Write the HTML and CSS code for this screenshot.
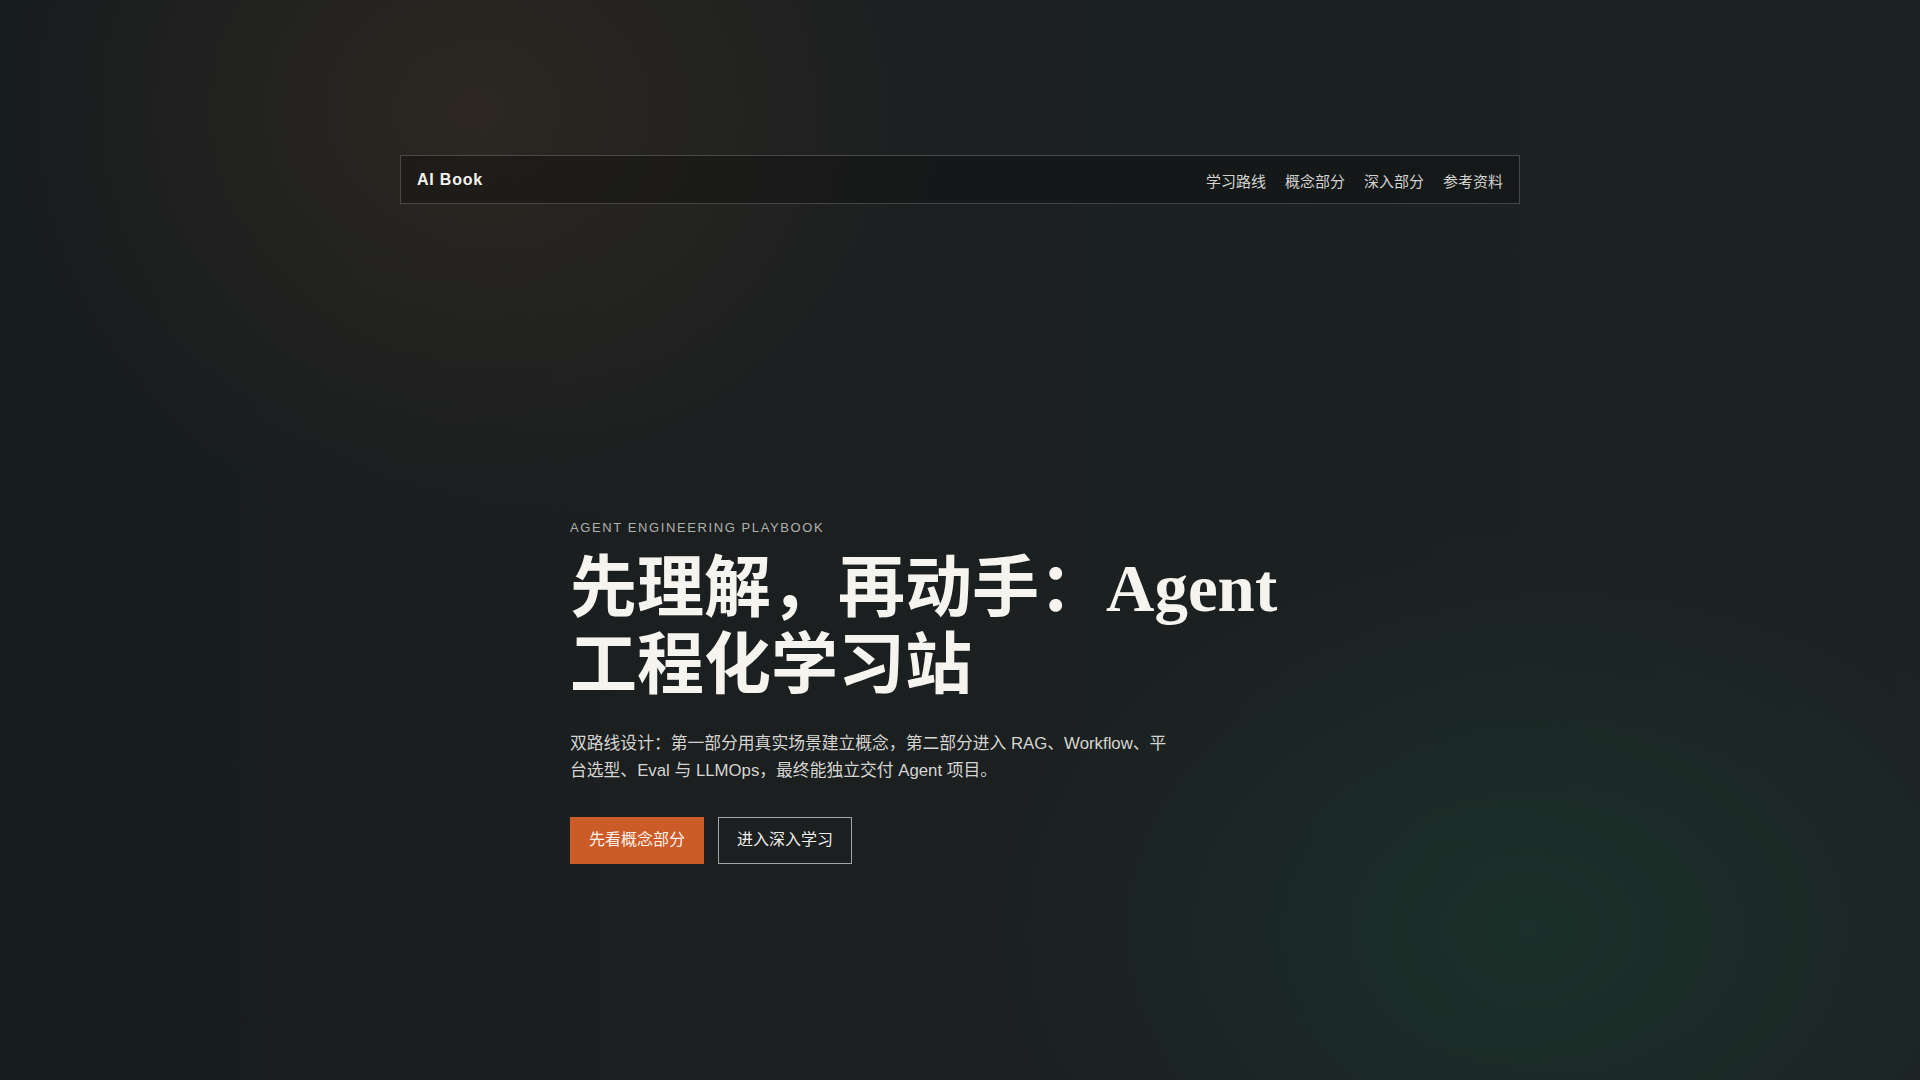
FILE: index.html
```html
<!DOCTYPE html>
<html lang="zh-CN">
<head>
<meta charset="utf-8">
<title>AI Book</title>
<link rel="stylesheet" href="styles.css">
</head>
<body>
<div class="page">
  <header class="topbar">
    <a class="brand" href="#">AI Book</a>
    <nav class="links">
      <a href="#">学习路线</a>
      <a href="#">概念部分</a>
      <a href="#">深入部分</a>
      <a href="#">参考资料</a>
    </nav>
  </header>
  <main class="hero">
    <p class="eyebrow">AGENT ENGINEERING PLAYBOOK</p>
    <h1 class="title">先理解，再动手：Agent 工程化学习站</h1>
    <p class="lead">双路线设计：第一部分用真实场景建立概念，第二部分进入 RAG、Workflow、平台选型、Eval 与 LLMOps，最终能独立交付 Agent 项目。</p>
    <div class="actions">
      <a class="btn btn-primary" href="#">先看概念部分</a>
      <a class="btn btn-ghost" href="#">进入深入学习</a>
    </div>
  </main>
</div>
</body>
</html>
```
FILE: styles.css
```css
* { box-sizing: border-box; }
html, body { margin: 0; padding: 0; }
body {
  min-height: 100vh;
  font-family: "Liberation Sans", "Noto Sans CJK SC", sans-serif;
  color: #e8e6e1;
  background:
    radial-gradient(ellipse 640px 560px at 470px 110px, rgba(62, 48, 34, 0.5), rgba(62, 48, 34, 0) 74%),
    radial-gradient(ellipse 760px 560px at 1530px 930px, rgba(28, 72, 56, 0.4), rgba(28, 72, 56, 0) 72%),
    linear-gradient(90deg, #171c1e 0%, #1b1f20 35%, #1b2021 70%, #1c2222 100%);
  background-color: #1b1f20;
}
a { text-decoration: none; color: inherit; }
.page {
  padding-top: 155px;
  min-height: 100vh;
}
.topbar {
  width: 1120px;
  height: 49px;
  margin: 0 auto;
  padding: 0 16px;
  display: flex;
  align-items: center;
  justify-content: space-between;
  border: 1px solid rgba(255, 255, 255, 0.2);
  background: rgba(12, 12, 12, 0.35);
}
.brand {
  font-size: 16px;
  font-weight: 700;
  letter-spacing: 0.05em;
  color: #f4f2ee;
}
.links {
  display: flex;
  gap: 19px;
  padding-top: 2px;
}
.links a {
  font-size: 15px;
  color: #d2d2d0;
}
.hero {
  max-width: 780px;
  margin: 314px auto 0;
}
.eyebrow {
  margin: 0 0 12px;
  font-size: 13px;
  line-height: 20px;
  letter-spacing: 1.6px;
  color: #b0b1ae;
}
.title {
  margin: 0 0 26px;
  font-family: "Liberation Serif", "Noto Sans CJK SC", serif;
  font-size: 67px;
  line-height: 77px;
  font-weight: 700;
  color: #f6f4ef;
}
.lead {
  max-width: 604px;
  margin: 0 0 33px;
  font-size: 16.8px;
  line-height: 27px;
  color: #d6d5d1;
}
.actions {
  display: flex;
  gap: 14px;
}
.btn {
  display: inline-block;
  padding: 10px 18px 11px;
  font-size: 16px;
  line-height: 24px;
  border: 1px solid transparent;
}
.btn-primary {
  background: #cb5b27;
  border-color: #cb5b27;
  color: #fbf3ec;
}
.btn-ghost {
  border-color: rgba(255, 255, 255, 0.6);
  color: #f0eeea;
}
```
